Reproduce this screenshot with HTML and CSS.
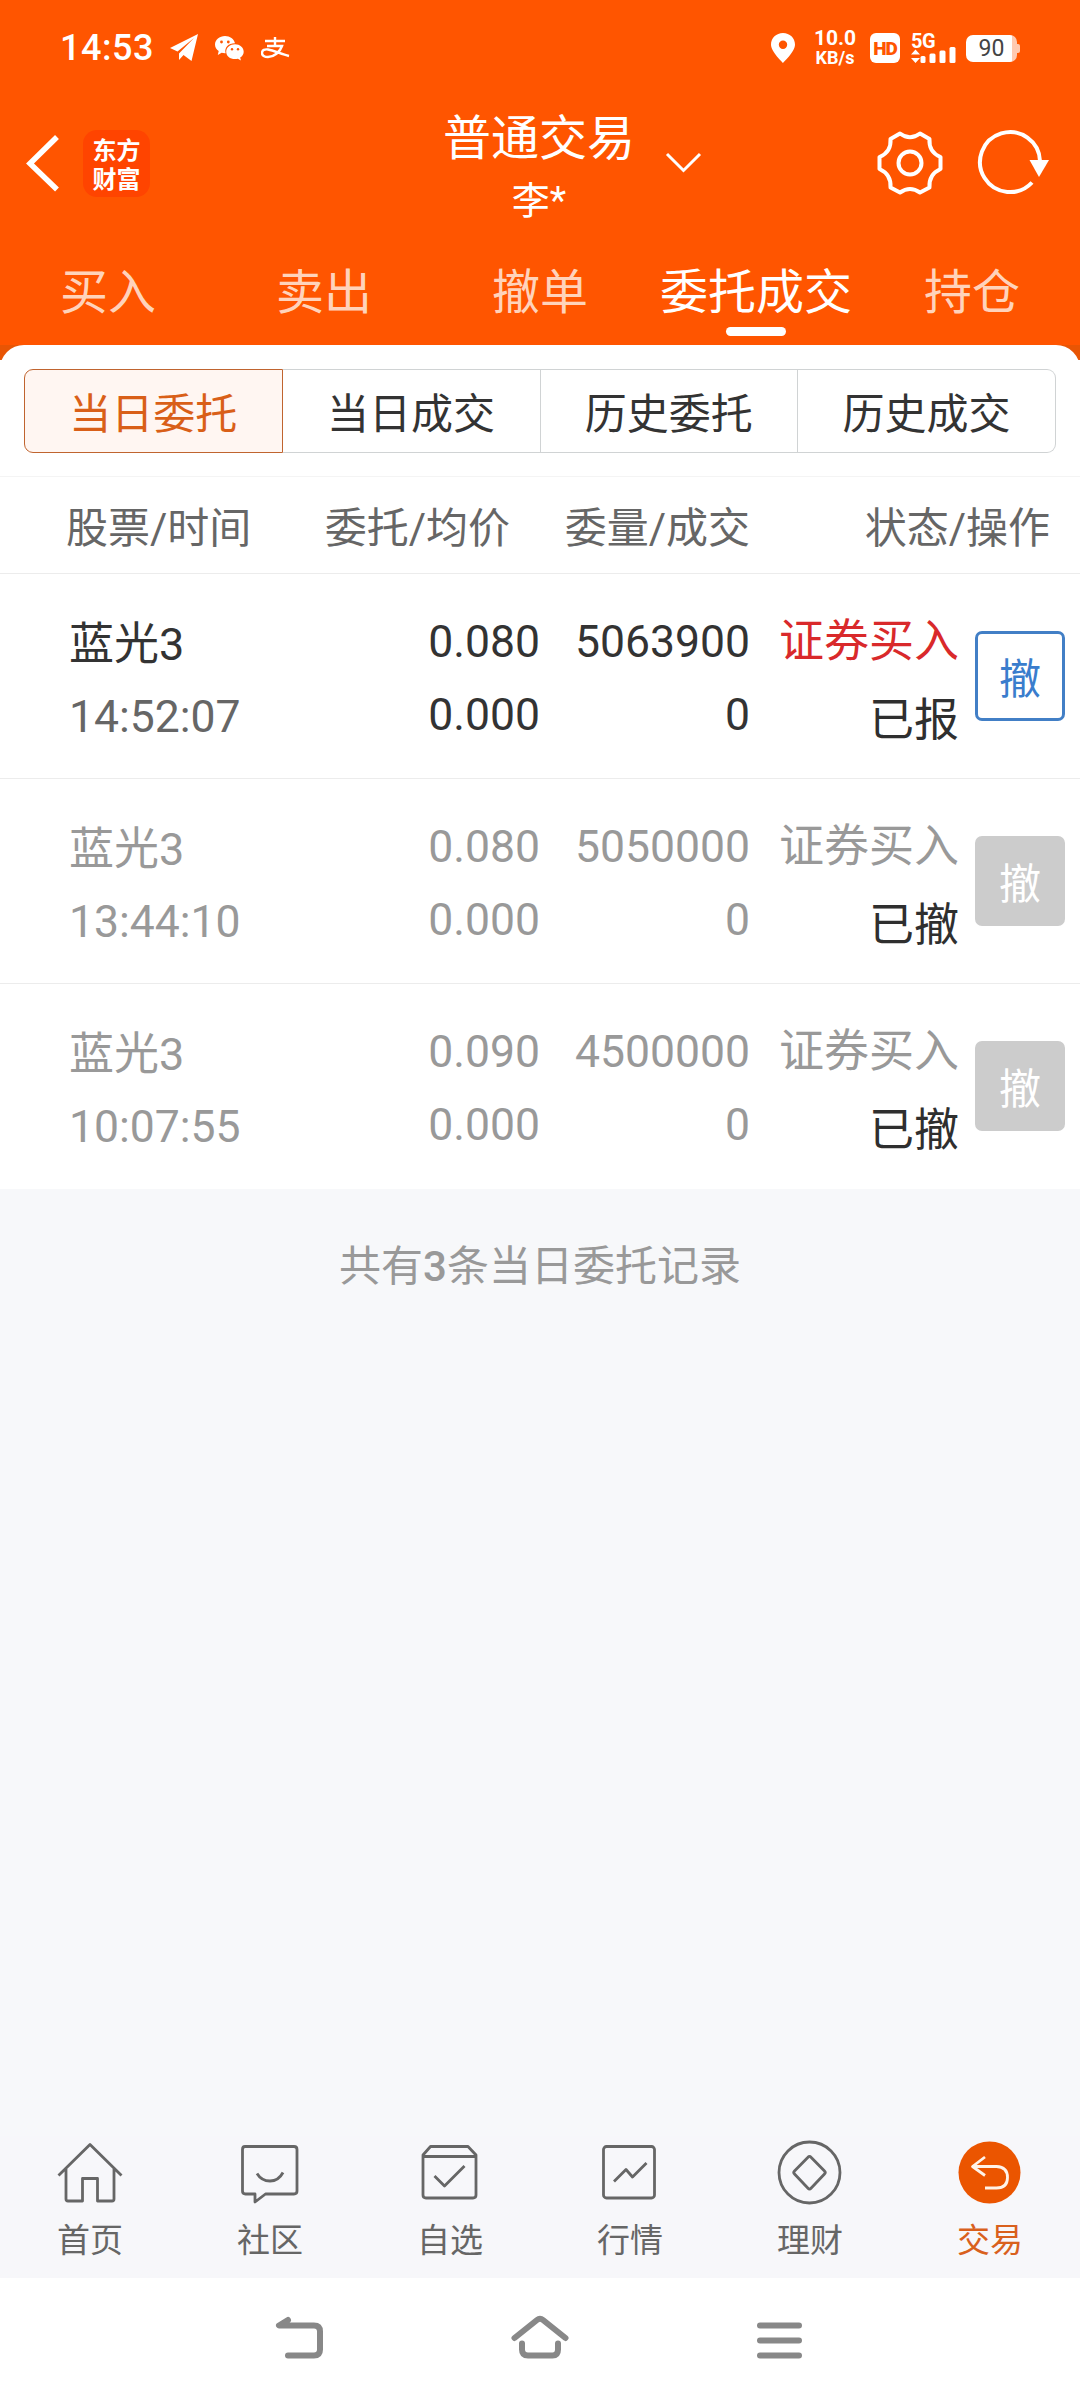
FILE: index.html
```
<!DOCTYPE html>
<html lang="zh-CN">
<head>
    <meta charset="UTF-8">
    <meta name="viewport" content="width=device-width, initial-scale=1.0">
    <title>普通交易</title>
    <link rel="stylesheet" href="styles.css">
</head>
<body>
    <header class="header">
        <div class="status-bar">
            <span class="clock">14:53</span>
            <svg class="st-plane" width="28" height="28" viewBox="0 0 28 28"><path d="M28 0L0 14l7.500 3.500L24 4 9 19.500V26l4.500-5 8 6z" fill="#fff"/></svg>
            <svg class="st-wechat" width="29" height="25" viewBox="0 0 29 25">
                <path d="M10 0C4.500 0 0 3.700 0 8.500c0 2.700 1.400 5 3.700 6.600L2.800 19l3.800-2.300c1 .3 2.200.5 3.400.5h.6C9 11 14 7 20 7.200 19 3 15 0 10 0z" fill="#fff"/>
                <path d="M20 8.300c-5 0-8.800 3.300-8.800 7.400s3.800 7.400 8.800 7.400c1 0 2-.2 2.900-.4l3 1.800-.7-2.900c2.200-1.400 3.500-3.500 3.500-5.900 0-4.100-3.800-7.400-8.700-7.400z" fill="#fff"/>
                <g fill="#ff5500"><circle cx="6.500" cy="6" r="1.400"/><circle cx="13.300" cy="6" r="1.400"/><circle cx="17" cy="13.300" r="1.200"/><circle cx="23" cy="13.300" r="1.200"/></g>
            </svg>
            <svg class="st-alipay" width="29" height="22" viewBox="0 0 29 22"><path d="M4 4h20M14 0v9M6 9h15c-2 6-8 11-14 11-3.500 0-6-1.500-6-4 0-3 3-4 6-3.500C13 13.500 20 17 28 19" fill="none" stroke="#fff" stroke-width="2.400"/></svg>
            <span class="spacer"></span>
            <svg class="st-pin" width="24" height="30" viewBox="0 0 24 30"><path fill-rule="evenodd" d="M12 0C5.300 0 0 5 0 11.600 0 19 12 30 12 30s12-11 12-18.400C24 5 18.700 0 12 0zm0 7.500a4.200 4.200 0 1 1 0 8.400 4.200 4.200 0 0 1 0-8.400z" fill="#fff"/></svg>
            <div class="speed"><span>10.0</span><span>KB/s</span></div>
            <span class="hd">HD</span>
            <div class="signal">
                <span>5G</span>
                <svg width="45" height="18" viewBox="0 0 45 18"><g fill="#fff"><path d="M0 8.500L4.500 3.500 9 8.500zM0 12L4.500 17 9 12z"/><rect x="9.500" y="10" width="5" height="7" rx="1.500"/><rect x="18.500" y="7.500" width="6" height="9.500" rx="1.500"/><rect x="28.500" y="4.500" width="6" height="12.500" rx="1.500"/><rect x="38.500" y="1" width="6" height="16" rx="1.500"/></g></svg>
            </div>
            <div class="battery"><span>90</span></div>
        </div>

        <div class="title-bar">
            <div class="title-left">
                <svg width="36" height="60" viewBox="0 0 36 60"><path d="M31 6L6 30.500 31 54.500" fill="none" stroke="#fff" stroke-width="5.500" stroke-linecap="square"/></svg>
                <div class="logo"><span>东方</span><span>财富</span></div>
            </div>
            <div class="account">
                <span class="account-type">普通交易</span>
                <span class="account-name">李*</span>
            </div>
            <svg class="chevron" width="38" height="22" viewBox="0 0 38 22"><path d="M2 2L18.500 18.500 35 2" fill="none" stroke="#fff" stroke-width="3"/></svg>
            <div class="title-right">
                <svg width="72" height="72" viewBox="0 0 72 72">
                    <path d="M26 6.500Q36 14 46 6.500L55.500 12Q54.500 25 66.500 30V42Q54.500 47.500 55.500 60.500L46 65.500Q36 58.500 26 65.500L16.500 60.500Q17.500 47.500 5.500 42V30Q17.500 25 16.500 12Z" fill="none" stroke="#fff" stroke-width="4" stroke-linejoin="round"/>
                    <circle cx="36" cy="36" r="11.500" fill="none" stroke="#fff" stroke-width="4"/>
                </svg>
                <svg width="76" height="72" viewBox="0 0 76 72">
                    <path d="M66 34A30 30 0 1 0 58 55.500" fill="none" stroke="#fff" stroke-width="4"/>
                    <path d="M55.500 33H75L65 50z" fill="#fff"/>
                </svg>
            </div>
        </div>

        <nav class="tabs">
            <a class="tab">买入</a>
            <a class="tab">卖出</a>
            <a class="tab">撤单</a>
            <a class="tab active">委托成交</a>
            <a class="tab">持仓</a>
        </nav>
    </header>

    <main class="main">
        <div class="panel">
            <div class="segments">
                <a class="segment active">当日委托</a>
                <a class="segment">当日成交</a>
                <a class="segment">历史委托</a>
                <a class="segment">历史成交</a>
            </div>
        </div>

        <div class="row head">
            <span class="col-name">股票/时间</span>
            <span class="col-price">委托/均价</span>
            <span class="col-count">委量/成交</span>
            <span class="col-state">状态/操作</span>
        </div>

        <div class="row">
            <div class="col-name"><span>蓝光3</span><span class="time">14:52:07</span></div>
            <div class="col-price"><span>0.080</span><span>0.000</span></div>
            <div class="col-count"><span>5063900</span><span>0</span></div>
            <div class="col-state"><span class="buy">证券买入</span><span class="state">已报</span></div>
            <button class="cancel">撤</button>
        </div>
        <div class="row done">
            <div class="col-name"><span>蓝光3</span><span class="time">13:44:10</span></div>
            <div class="col-price"><span>0.080</span><span>0.000</span></div>
            <div class="col-count"><span>5050000</span><span>0</span></div>
            <div class="col-state"><span class="buy">证券买入</span><span class="state">已撤</span></div>
            <button class="cancel">撤</button>
        </div>
        <div class="row done">
            <div class="col-name"><span>蓝光3</span><span class="time">10:07:55</span></div>
            <div class="col-price"><span>0.090</span><span>0.000</span></div>
            <div class="col-count"><span>4500000</span><span>0</span></div>
            <div class="col-state"><span class="buy">证券买入</span><span class="state">已撤</span></div>
            <button class="cancel">撤</button>
        </div>
    </main>

    <p class="summary">共有<b>3</b>条当日委托记录</p>

    <nav class="bottom-nav">
        <a class="nav-item">
            <svg width="72" height="72" viewBox="0 0 72 72"><path d="M4.500 39.500L36 8.500 67.500 39.500M12 33V63Q12 65 14 65H28.500V42.500H43.500V65H58Q60 65 60 63V33"/></svg>
            <span>首页</span>
        </a>
        <a class="nav-item">
            <svg width="72" height="72" viewBox="0 0 72 72"><path d="M11 10.500H60Q63 10.500 63 13.500V55Q63 58 60 58H31.500L21 66V58H11.500Q8.500 58 8.500 55V13.500Q8.500 10.500 11 10.500zM23 37.500Q27.500 45 36 45T49 36.500"/></svg>
            <span>社区</span>
        </a>
        <a class="nav-item">
            <svg width="72" height="72" viewBox="0 0 72 72"><path d="M9 19L16.500 10.500H54L62 19V59Q62 62 59 62H12Q9 62 9 59zM9 20.500H62M20.500 40L30.500 50 50.500 30"/></svg>
            <span>自选</span>
        </a>
        <a class="nav-item">
            <svg width="72" height="72" viewBox="0 0 72 72"><rect x="9.500" y="10.500" width="51" height="51.500" rx="3"/><path d="M20 45.500L32 33.500 38.500 41 52.500 27"/></svg>
            <span>行情</span>
        </a>
        <a class="nav-item">
            <svg width="72" height="72" viewBox="0 0 72 72"><circle cx="35.500" cy="36.500" r="30.500"/><path d="M34 21.200Q35.500 19.500 37 21.200L50.500 35Q52 36.500 50.500 38L37 52.300Q35.500 54 34 52.300L20.500 38Q19 36.500 20.500 35z"/></svg>
            <span>理财</span>
        </a>
        <a class="nav-item active">
            <svg width="72" height="72" viewBox="0 0 72 72"><circle class="disc" cx="35.500" cy="36.500" r="31"/><path d="M31 21L18.500 30.500 31 39.500M19 30.500H42.500Q53.500 31 53.500 41.500T42.500 52H31"/></svg>
            <span>交易</span>
        </a>
    </nav>

    <div class="system-nav">
        <svg width="60" height="54" viewBox="0 0 60 54"><path d="M18 9L9 14.500H44Q50 14.500 50 20.500V38.500Q50 44.500 44 44.500H18"/></svg>
        <svg width="60" height="54" viewBox="0 0 60 54"><path d="M4.500 27L27 9Q30 6.500 33 9L55.500 27M12 32.500V38.500Q12 44.500 18 44.500H42.500Q48 44.500 48 38.500V32.500"/></svg>
        <svg width="60" height="54" viewBox="0 0 60 54"><path d="M10 14.500H49M10 29.500H49M10 44.500H49"/></svg>
    </div>
</body>
</html>
```
FILE: styles.css
```
* {
    box-sizing: border-box;
}

body {
    margin: 0;
    width: 1080px;
    height: 2404px;
    display: flex;
    flex-direction: column;
    background-color: #f7f8fa;
    color: #333;
    font-family: Roboto, "Noto Sans CJK SC", sans-serif;
}

svg {
    display: block;
    flex: none;
}

/* header */

.header {
    height: 345px;
    background-color: #ff5500;
    color: #fff;
}

.status-bar {
    display: flex;
    align-items: center;
    height: 96px;
    padding: 0 60px 0 60px;
}

.clock {
    width: 110px;
    font-size: 36px;
    font-weight: 500;
    letter-spacing: 0.5px;
}

.st-wechat {
    margin-left: 17px;
}

.st-alipay {
    margin-left: 17px;
}

.spacer {
    flex: 1;
}

.speed {
    display: flex;
    flex-direction: column;
    align-items: center;
    width: 46px;
    margin-left: 17px;
    font-size: 18px;
    font-weight: 700;
    line-height: 19px;
}

.speed span:first-child {
    font-size: 21px;
}

.hd {
    width: 30px;
    height: 30px;
    margin-left: 12px;
    border-radius: 6px;
    background-color: #fff;
    color: #ff5500;
    font-size: 19px;
    font-weight: 900;
    line-height: 31px;
    text-align: center;
    letter-spacing: -1px;
}

.signal {
    display: flex;
    flex-direction: column;
    width: 45px;
    margin-left: 11px;
    font-size: 20px;
    font-weight: 700;
    line-height: 16px;
    letter-spacing: -0.5px;
}

.signal svg {
    margin-top: -3px;
}

.battery {
    position: relative;
    width: 51px;
    height: 27px;
    margin-left: 10px;
    margin-right: 3px;
    border-radius: 7px;
    background: linear-gradient(to right, #fff 46px, #ffc9b0 46px);
    color: #444;
    font-size: 23px;
    line-height: 28px;
    text-align: center;
}

.battery::after {
    content: "";
    position: absolute;
    right: -3px;
    top: 9px;
    width: 3px;
    height: 9px;
    border-radius: 0 2px 2px 0;
    background-color: #ffc9b0;
}

.title-bar {
    display: flex;
    align-items: center;
    height: 134px;
    padding: 0 30px 0 24px;
}

.title-left {
    display: flex;
    align-items: center;
    gap: 23px;
    width: 419px;
}

.logo {
    display: flex;
    flex-direction: column;
    align-items: center;
    justify-content: center;
    width: 67px;
    height: 67px;
    border-radius: 14px;
    background-color: #ff4400;
    font-family: "Noto Sans CJK SC", sans-serif;
    font-size: 24px;
    font-weight: 700;
    line-height: 29px;
}

.account {
    display: flex;
    flex-direction: column;
    align-items: center;
    width: 192px;
    padding-top: 14px;
}

.account-type {
    font-size: 48px;
    line-height: 62px;
}

.account-name {
    font-size: 38px;
    line-height: 62px;
}

.chevron {
    margin-left: 30px;
}

.title-right {
    display: flex;
    gap: 28px;
    margin-left: auto;
}

.tabs {
    display: flex;
    height: 115px;
}

.tab {
    position: relative;
    flex: 1;
    font-size: 48px;
    line-height: 125px;
    text-align: center;
    white-space: nowrap;
    color: #ffd3bb;
}

.tab.active {
    color: #fff;
}

.tab.active::after {
    content: "";
    position: absolute;
    left: 78px;
    top: 97px;
    width: 60px;
    height: 9px;
    border-radius: 5px;
    background-color: #fff;
}

/* orders */

.main {
    background: linear-gradient(#e85504 15px, #fff 15px);
}

.panel {
    height: 132px;
    padding: 24px 24px 0;
    border-radius: 24px 24px 0 0;
    border-bottom: 1px solid #f4f4f4;
    background-color: #fff;
}

.segments {
    display: flex;
    height: 84px;
}

.segment {
    flex: 1;
    border: 1px solid #d0d3d4;
    border-left-width: 0;
    font-size: 42px;
    line-height: 89px;
    text-align: center;
}

.segment:last-child {
    border-radius: 0 9px 9px 0;
}

.segment.active {
    border: 1px solid #c0642f;
    border-radius: 9px 0 0 9px;
    background-color: #fff6f2;
    color: #d95f18;
}

.row {
    display: flex;
    height: 205px;
    border-bottom: 1px solid #ececec;
    font-size: 45px;
}

.row:last-child {
    border-bottom-color: #fff;
}

.row div {
    display: flex;
    flex-direction: column;
}

.row .col-name {
    width: 300px;
    padding: 35px 0 0 69px;
    line-height: 72px;
}

.row .col-price {
    width: 240px;
    padding-top: 32px;
    font-size: 44.500px;
    line-height: 73px;
    text-align: right;
}

.row .col-count {
    width: 210px;
    padding-top: 32px;
    font-size: 44.500px;
    line-height: 73px;
    text-align: right;
}

.row .col-state {
    width: 209px;
    padding-top: 28px;
    line-height: 79px;
    text-align: right;
}

.row .time {
    font-size: 44.500px;
    color: #666;
}

.buy {
    color: #d9292b;
}

.state {
    color: #2f2f2f;
}

.cancel {
    width: 90px;
    height: 90px;
    margin: 57px 0 0 16px;
    padding: 4px 0 0;
    border: 3px solid #427fc6;
    border-radius: 7px;
    background-color: #fff;
    color: #3a7dcd;
    font-family: inherit;
    font-size: 42px;
    line-height: 84px;
}

.done,
.done .time,
.done .buy {
    color: #999;
}

.done .cancel {
    border-color: #ccc;
    background-color: #ccc;
    color: #fff;
}

.row.head {
    height: 97px;
    color: #666;
    font-size: 42px;
}

.row.head span {
    padding-top: 0;
    font-size: 42px;
    line-height: 103px;
}

.row.head .col-name {
    padding-left: 66px;
}

.row.head .col-price {
    width: 210px;
}

.row.head .col-count {
    width: 240px;
}

.row.head .col-state {
    width: 300px;
}

.summary {
    flex: 1;
    margin: 0;
    padding-top: 49px;
    color: #999;
    font-size: 42px;
    line-height: 58px;
    text-align: center;
}

.summary b {
    font-weight: 500;
}

/* bottom bars */

.bottom-nav {
    display: flex;
    height: 142px;
    background-color: #f7f7fa;
}

.nav-item {
    display: flex;
    flex-direction: column;
    align-items: center;
    flex: 1;
    color: #666;
    font-size: 33px;
    line-height: 66px;
}

.nav-item svg {
    fill: none;
    stroke: #666;
    stroke-width: 2.800;
    stroke-linejoin: round;
}

.nav-item.active {
    color: #d9601d;
}

.nav-item.active svg {
    stroke: #fff3e8;
}

.nav-item .disc {
    fill: #eb5500;
    stroke: none;
}

.system-nav {
    display: flex;
    justify-content: center;
    gap: 180px;
    height: 126px;
    padding-top: 33px;
    background-color: #fff;
}

.system-nav svg {
    fill: none;
    stroke: #888;
    stroke-width: 6;
    stroke-linecap: round;
    stroke-linejoin: round;
}
```
